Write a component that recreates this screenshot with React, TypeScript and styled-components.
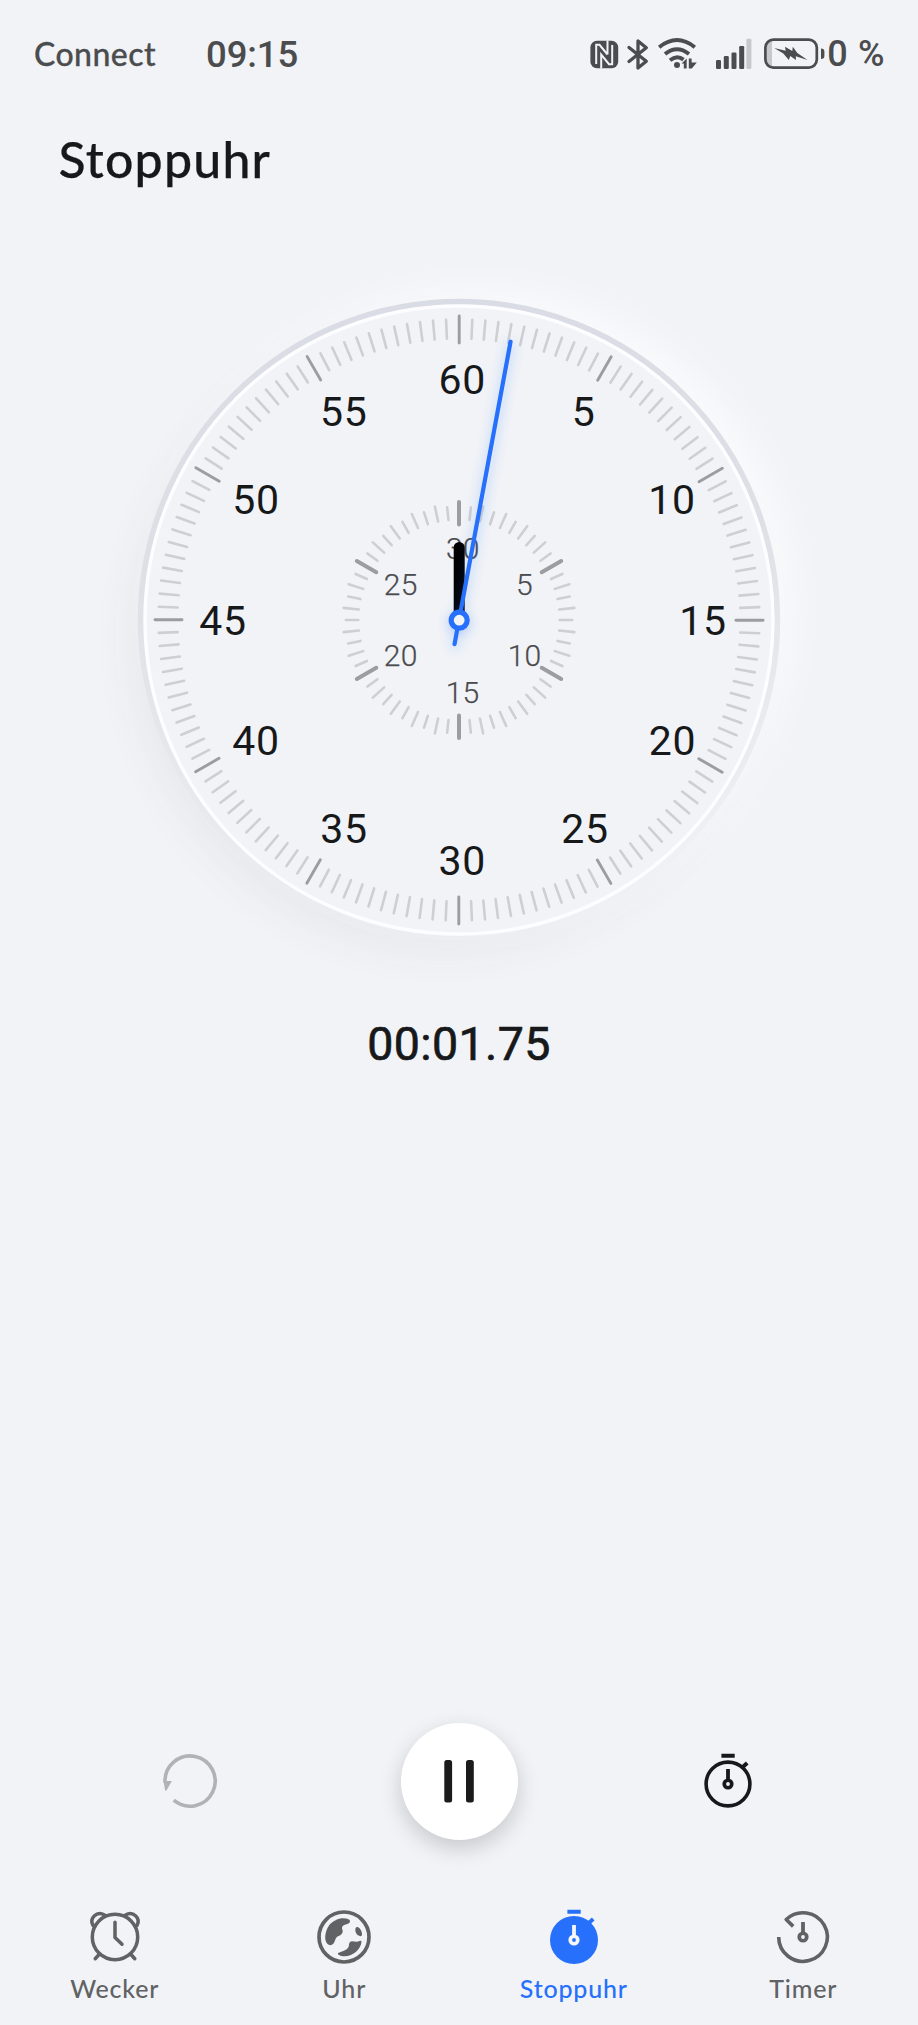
import React from 'react';
import styled, { createGlobalStyle } from 'styled-components';

const INK = '#17181a';
const GREY = '#616264';
const STATUS = '#4b4c4e';
const BLUE = '#2670fb';
const PAGE = '#f1f3f7';

const GlobalStyle = createGlobalStyle`
  body { margin: 0; background: ${PAGE}; }
  *, *::before, *::after { box-sizing: border-box; }
  button { border: 0; padding: 0; background: none; font: inherit; color: inherit; }
  svg { display: block; flex: none; }
`;

const Screen = styled.div`
  width: 918px;
  height: 2025px;
  overflow: hidden;
  display: flex;
  flex-direction: column;
  background: ${PAGE};
  color: ${INK};
  font-family: Lato, 'Noto Sans', sans-serif;
`;

const StatusBar = styled.header`
  height: 108px;
  padding: 0 33px 0 34px;
  display: flex;
  align-items: center;
  color: ${STATUS};
`;

const Carrier = styled.span`
  width: 172px;
  white-space: nowrap;
  font-size: 32px;
  font-weight: 500;
  line-height: 44px;
  letter-spacing: 0.45px;
  -webkit-text-stroke: 0.3px currentColor;
`;

const Digits = styled.span<{ $size: number; $weight?: number; $spacing?: number; $stroke?: number }>`
  font-family: Roboto, sans-serif;
  font-size: ${(p) => p.$size}px;
  font-weight: ${(p) => p.$weight ?? 500};
  letter-spacing: ${(p) => p.$spacing ?? 0}px;
  -webkit-text-stroke: ${(p) => p.$stroke ?? 0}px currentColor;
  white-space: pre;
`;

const StatusIcons = styled.div`
  margin-left: auto;
  display: flex;
  align-items: center;
`;

const Title = styled.h1`
  margin: 0;
  height: 100px;
  padding-left: 58.5px;
  font-size: 50px;
  font-weight: 500;
  line-height: 102px;
  letter-spacing: 1.2px;
  -webkit-text-stroke: 0.25px currentColor;
`;

const DialArea = styled.section`
  height: 772px;
  padding-top: 96px;
  display: flex;
  justify-content: center;
`;

const DialFace = styled.div`
  width: 632px;
  height: 632px;
  border-radius: 50%;
  background: ${PAGE};
  box-shadow: 18px -14px 40px rgba(255, 255, 255, 0.65),
    -14px 18px 40px rgba(70, 72, 78, 0.055);
  svg { overflow: visible; }
`;

const Elapsed = styled.div`
  height: 128px;
  display: flex;
  justify-content: center;
  align-items: center;
`;

const Controls = styled.div`
  margin-top: auto;
  height: 120px;
  padding: 0 160px;
  display: flex;
  justify-content: space-between;
  align-items: center;
`;

const RoundButton = styled.button`
  width: 117px;
  height: 117px;
  border-radius: 50%;
  background: #fff;
  display: grid;
  place-items: center;
  box-shadow: 0 8px 22px rgba(0, 0, 0, 0.18);
`;

const TabBar = styled.nav`
  height: 184px;
  padding-top: 66px;
  display: grid;
  grid-template-columns: repeat(4, 1fr);
`;

const Tab = styled.button<{ $active?: boolean }>`
  display: flex;
  flex-direction: column;
  align-items: center;
  justify-content: flex-start;
  color: ${(p) => (p.$active ? BLUE : GREY)};
  font-size: 25px;
  font-weight: 500;
`;

const TabLabel = styled.span`
  line-height: 30px;
  margin-top: 6px;
  letter-spacing: 0.8px;
`;

const outerNumbers: [string, number, number][] = [
  ['60', 2.7, -241], ['5', 124, -209], ['10', 212.5, -120.7], ['15', 243.5, 0],
  ['20', 213, 120], ['25', 125.5, 208], ['30', 2.7, 240], ['35', -115.5, 208],
  ['40', -203.5, 120], ['45', -236.5, 0], ['50', -203.5, -120.7], ['55', -115.7, -209],
];

const innerNumbers: [string, number, number][] = [
  ['30', 3.6, -72], ['5', 65.3, -36], ['10', 65.3, 35.7],
  ['15', 3.4, 72], ['20', -58.5, 35.7], ['25', -58.5, -36],
];

function Dial() {
  return (
    <svg width="632" height="632" viewBox="-316 -316 632 632">
      <defs>
        <linearGradient id="rim" x1="0.4" y1="0" x2="0.5" y2="1">
          <stop offset="0" stopColor="#dadce5" />
          <stop offset="0.4" stopColor="#dfe0e6" />
          <stop offset="0.8" stopColor="#e8e9ec" stopOpacity="0.7" />
          <stop offset="1" stopColor="#eeeff1" stopOpacity="0" />
        </linearGradient>
        <filter id="glow" x="-40" y="-300" width="120" height="350" filterUnits="userSpaceOnUse">
          <feDropShadow dx="0" dy="3" stdDeviation="6" floodColor={BLUE} floodOpacity="0.35" />
        </filter>
      </defs>
      <circle r="318.2" fill="none" stroke="url(#rim)" strokeWidth="6" />
      <circle r="314" fill="none" stroke="#fdfdff" strokeWidth="3.4" />
      <g strokeLinecap="round">
        {Array.from({ length: 144 }, (_, i) => {
          const major = i % 12 === 0;
          return (
            <line
              key={i}
              x1={0.2}
              x2={0.2}
              y1={major ? -304 : -300.5}
              y2={major ? -277 : -281.5}
              stroke={major ? '#9c9da0' : '#cfcfd1'}
              strokeWidth={major ? 2.9 : 2.6}
              transform={`rotate(${i * 2.5})`}
            />
          );
        })}
        {Array.from({ length: 60 }, (_, i) => {
          const major = i % 10 === 0;
          return (
            <line
              key={i}
              y1={major ? -118 : i % 2 ? -113.2 : -116}
              y2={major ? -95.5 : -100.7}
              stroke={major ? '#9c9da0' : '#cfcfd1'}
              strokeWidth={major ? 4 : 2.6}
              transform={`rotate(${i * 6})`}
            />
          );
        })}
      </g>
      <g fontFamily="Roboto, sans-serif" textAnchor="middle" fontSize="41" fill={INK}>
        {outerNumbers.map(([n, x, y]) => (
          <text key={n} x={x + 0.5} y={y + 14.6} letterSpacing="0.7">{n}</text>
        ))}
      </g>
      <g fontFamily="Roboto, sans-serif" textAnchor="middle" fontSize="30" fontWeight="300" fill="#4a4b4e" stroke="#4a4b4e" strokeWidth="0.25">
        {innerNumbers.map(([n, x, y]) => (
          <text key={n} x={x + 0.2} y={y + 10.5} letterSpacing="0.2">{n}</text>
        ))}
      </g>
      <line y1="-72.5" y2="0" x1="0.2" x2="0.2" stroke="#000" strokeWidth="11" strokeLinecap="round" />
      <g filter="url(#glow)">
        <g transform="rotate(10.5)">
          <line y1="-283" y2="24.5" stroke={BLUE} strokeWidth="4.2" strokeLinecap="round" />
        </g>
        <circle r="8" cx="0.2" cy="0.2" fill="#f1f3f7" stroke={BLUE} strokeWidth="5.2" />
      </g>
    </svg>
  );
}

function StatusGlyphs() {
  return (
    <svg width="238" height="36" viewBox="586 36 238 36" fill={STATUS}>
      <rect x="587.4" y="40.8" width="27.8" height="27.4" rx="6.5" />
      <path
        d="M593.200 64V44.800H596.500L604.500 54.500M609.200 45V64.200H606L598.200 54.500V68.500M604.500 54.500V40.500"
        fill="none" stroke={PAGE} strokeWidth="2"
      />
      <path
        d="M626 47.5L643.3 61.3L635 68V41L643.3 47.7L626 61.5"
        fill="none" stroke={STATUS} strokeWidth="3.3" strokeLinejoin="round" strokeLinecap="round"
      />
      <g fill="none" stroke={STATUS} strokeWidth="3.9">
        <path d="M656.2 47.2Q674 33 691.8 47.2" />
        <path d="M662 54Q674 44.5 686 54" />
        <path d="M667 60.2Q674 54.5 680.5 59.6" />
      </g>
      <circle cx="674" cy="65" r="3" />
      <path d="M678.5 63.5L683.7 58.5V68.5H680.8V63.5ZM685.8 58.5H688.6V62.5H693.8L688.8 68.5H685.8Z" />
      <rect x="713" y="60" width="5" height="9" rx="1.3" />
      <rect x="720.8" y="56" width="5" height="13" rx="1.3" />
      <rect x="728.5" y="52.5" width="5" height="16.5" rx="1.3" />
      <rect x="736.2" y="46" width="5" height="23" rx="1.3" />
      <rect x="743.4" y="38.8" width="5" height="30.2" rx="1.3" fill="#c7c8cb" />
      <path d="M769 41h-1q-4.5 1.5-4.5 6v13q0 4.5 4.5 6h1z" fill="#c7c8cb" />
      <rect x="762.4" y="39.6" width="51.4" height="28" rx="8" fill="none" stroke={STATUS} strokeWidth="2.7" />
      <path d="M818 48.5q3.4 0 3.4 3.2v4q0 3.2-3.4 3.2z" />
      <path d="M771.2 48L782.7 50.8L782 46.8L789.3 51L789.8 46.8L794.3 53L804.5 60L792.8 56.2L793 60L787.3 56L785.8 60L780.3 53.6Z" />
    </svg>
  );
}

function StopwatchIcon({ filled = false }: { filled?: boolean }) {
  return (
    <svg width="60" height="60" viewBox="-30 -33 60 60">
      <circle r={filled ? 24 : 21.9} fill={filled ? BLUE : 'none'} stroke={filled ? 'none' : INK} strokeWidth="3.6" />
      <path
        d="M-6.6 -28.3H6.7M14.5 -16.8L19.2 -21"
        stroke={filled ? BLUE : INK} strokeWidth="4" fill="none"
      />
      <Needle color={filled ? '#f4f6fc' : INK} hole={filled ? BLUE : PAGE} />
    </svg>
  );
}

function Needle({ color, hole }: { color: string; hole: string }) {
  return (
    <g>
      <path d="M0 -15V-3" stroke={color} strokeWidth="3.8" />
      <circle r="5.6" fill={color} />
      <circle r="1.9" fill={hole} />
    </g>
  );
}

function ResetIcon() {
  return (
    <svg width="60" height="60" viewBox="-30 -30 60 60">
      <path d="M-16.2 19.2A25.1 25.1 0 1 0 -25 1.5" fill="none" stroke="#b0b2b5" strokeWidth="3.6" />
      <path d="M-26.5 0H-18.2L-23.5 9.5Q-24.5 10.2-25 9Z" fill="#b0b2b5" />
    </svg>
  );
}

function PauseIcon() {
  return (
    <svg width="30" height="44" viewBox="0 0 30 44" fill="#1b1b1c">
      <rect x="0.3" y="1" width="7.8" height="42.5" rx="2.5" />
      <rect x="22" y="1" width="7.8" height="42.5" rx="2.5" />
    </svg>
  );
}

function AlarmIcon() {
  return (
    <svg width="60" height="60" viewBox="-30 -30 60 60" fill="none" stroke={GREY} strokeWidth="3.5" strokeLinecap="round" strokeLinejoin="round">
      <circle r="22.7" />
      <path d="M0 -14.8V0.5L7 7.2M-15.5 17L-19.8 21.7M15.5 17L19.8 21.7" />
      <path d="M-22 -11.5C-26 -19 -18 -26.5 -10.5 -22M22 -11.5C26 -19 18 -26.5 10.5 -22" />
    </svg>
  );
}

function GlobeIcon() {
  return (
    <svg width="60" height="60" viewBox="-30 -30 60 60" fill={GREY}>
      <circle r="25" fill="none" stroke={GREY} strokeWidth="3.7" />
      <path d="M-16.5 7C-20 4 -19.5 -5 -15 -11.5C-10 -18 -1 -20.5 5 -17.5C7.5 -15.5 5 -12.8 1.5 -12.5C-2 -11.5 -2.5 -9.5 -1.5 -7C-0.5 -4 -3 -1.5 -6.5 -0.5C-9 1 -8.5 4 -10.5 6.5C-12.5 8.8 -15 8.5 -16.5 7Z" />
      <path d="M11.5 -8.5C12 -11 15 -10.5 16.5 -7.5C18.5 -4 18.5 -0.8 16.5 -0.8C13 -1.5 10.5 -5 11.5 -8.5Z" />
      <path d="M17.5 4.5C17 12.5 9 19.5 0 19.2C-3 19 -6.5 18 -6 16.2C-5 15 0.5 14.5 3.5 11.5C6 9 4 7.5 6 5C8 3 11 5.5 14 4.5C16 3.5 17.5 3.5 17.5 4.5Z" />
    </svg>
  );
}

function TimerIcon() {
  return (
    <svg width="60" height="60" viewBox="-30 -30 60 60">
      <path d="M-24.3 0A24.3 24.3 0 1 0 -16.8 -17.5L-9.8 -10.6" fill="none" stroke={GREY} strokeWidth="3.6" strokeLinejoin="round" />
      <Needle color={GREY} hole={PAGE} />
    </svg>
  );
}

export default function App() {
  return (
    <Screen>
      <GlobalStyle />
      <StatusBar>
        <Carrier>Connect</Carrier>
        <Digits $size={36.5} $spacing={-0.1}>09:15</Digits>
        <StatusIcons>
          <StatusGlyphs />
          <Digits $size={36} $spacing={0.6}>0 %</Digits>
        </StatusIcons>
      </StatusBar>
      <Title>Stoppuhr</Title>
      <DialArea>
        <DialFace>
          <Dial />
        </DialFace>
      </DialArea>
      <Elapsed>
        <Digits $size={46.5} $weight={400} $stroke={0.7} $spacing={0.4}>00:01.75</Digits>
      </Elapsed>
      <Controls>
        <button aria-label="Zurücksetzen"><ResetIcon /></button>
        <RoundButton aria-label="Pause"><PauseIcon /></RoundButton>
        <button aria-label="Runde"><StopwatchIcon /></button>
      </Controls>
      <TabBar>
        <Tab><AlarmIcon /><TabLabel>Wecker</TabLabel></Tab>
        <Tab><GlobeIcon /><TabLabel>Uhr</TabLabel></Tab>
        <Tab $active><StopwatchIcon filled /><TabLabel>Stoppuhr</TabLabel></Tab>
        <Tab><TimerIcon /><TabLabel>Timer</TabLabel></Tab>
      </TabBar>
    </Screen>
  );
}
